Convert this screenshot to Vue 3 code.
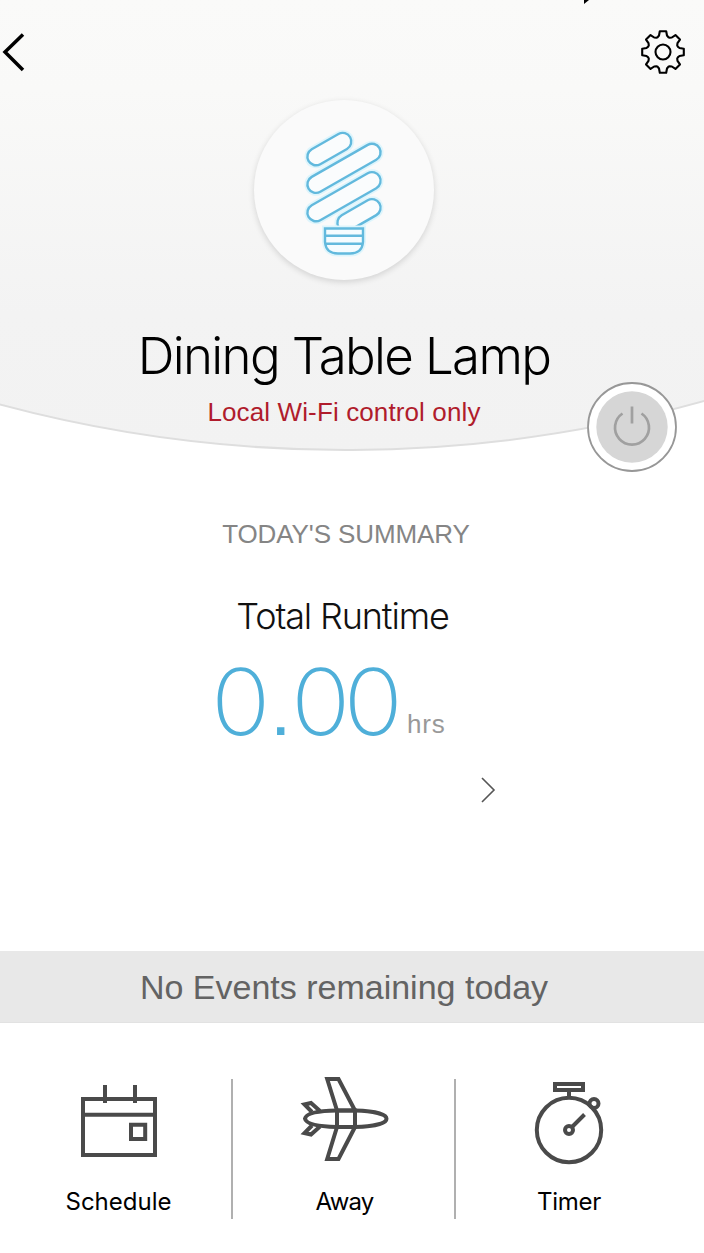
<template>
  <div class="screen">
    <header class="hero">
      <svg class="hero-bg" width="704" height="460" viewBox="0 0 704 460">
        <defs>
          <linearGradient id="heroFill" x1="0" y1="0" x2="0" y2="1">
            <stop offset="0" stop-color="#fafaf9" />
            <stop offset="0.2" stop-color="#f9f9f8" />
            <stop offset="0.7" stop-color="#f3f3f3" />
            <stop offset="1" stop-color="#f2f2f2" />
          </linearGradient>
        </defs>
        <path d="M-2 -2H706V400.500A1337 1337 0 0 1 -2 404Z" fill="url(#heroFill)" stroke="#dedede" stroke-width="2" />
        <path d="M584 0h5l-5 4z" fill="#000" />
      </svg>
      <nav class="nav">
        <button class="icon-button" aria-label="Back">
          <svg width="28" height="44" viewBox="0 0 28 44">
            <path d="M23 4.500L5 22l18 18" fill="none" stroke="#000" stroke-width="3.500" />
          </svg>
        </button>
        <button class="icon-button" aria-label="Settings">
          <svg width="48" height="48" viewBox="-24 -24 48 48">
            <path :d="gearPath" class="gear" />
            <circle r="7.500" class="gear" />
          </svg>
        </button>
      </nav>
      <div class="device">
        <div class="bulb">
          <svg width="90" height="134" viewBox="299 125 90 134">
            <g v-for="coil in coils" :key="coil">
              <path :d="coil" class="coil-glow" />
              <path :d="coil" class="coil-edge" />
              <path :d="coil" class="coil-inner" />
            </g>
            <path d="M325 228.500H363V242Q362 253.500 350 253.500H338Q326 253.500 325 242Z" class="base glow" />
            <path d="M325 228.500H363V242Q362 253.500 350 253.500H338Q326 253.500 325 242ZM325 235.800H363M325 243.700H363" class="base" />
          </svg>
        </div>
        <h1>{{ device.name }}</h1>
        <p class="status">{{ device.status }}</p>
      </div>
      <button class="power" aria-label="Power">
        <svg width="90" height="90" viewBox="-45 -45 90 90">
          <circle r="44" fill="#fff" stroke="#979797" stroke-width="1.800" />
          <circle r="35.700" fill="#d6d6d6" />
          <path d="M-9.500 -13.500A17 17 0 1 0 9.500 -13.500M0 -20.500V-3.500" fill="none" stroke="#a0a0a0" stroke-width="2.700" />
        </svg>
      </button>
    </header>

    <main class="summary">
      <h2>TODAY'S SUMMARY</h2>
      <h3>Total Runtime</h3>
      <div class="runtime">
        <div class="value"><span>{{ device.hours }}</span><span class="dot">.</span><span>{{ device.fraction }}</span></div>
        <span class="unit">hrs</span>
      </div>
      <svg class="more" width="16" height="28" viewBox="0 0 16 28">
        <path d="M2 2l12 12L2 26" fill="none" stroke="#555" stroke-width="1.600" />
      </svg>
    </main>

    <div class="events"><span>No Events remaining today</span></div>

    <footer class="actions">
      <button class="action schedule">
        <svg width="90" height="90" viewBox="74 1075 90 90">
          <path d="M83 1099H155V1155H83ZM83 1114.700H155M105 1085V1103M135 1085V1103M131 1124.700H145.200V1139H131Z" />
        </svg>
        <span>Schedule</span>
      </button>
      <button class="action away">
        <svg width="90" height="90" viewBox="299 1075 90 90">
          <path d="M304 1118.700C305 1113 317 1110.800 336 1110.500H354C372 1111 385.500 1114 385.500 1118.700C385.500 1123.500 372 1126.500 354 1127H336C317 1126.600 305 1124 304 1118.700Z" />
          <path d="M336 1110.500H354V1127H336ZM336 1110.500L326.200 1079H337.500L354 1110.500M336 1127L326.200 1159H337.500L354 1127" />
          <path d="M319 1111L310 1103L303.500 1104.500L311 1112M319 1126.500L310 1134.500L303.500 1133L311 1125.500" />
        </svg>
        <span>Away</span>
      </button>
      <button class="action timer">
        <svg width="90" height="90" viewBox="524 1075 90 90">
          <circle cx="569" cy="1130" r="32.200" />
          <circle cx="569" cy="1130" r="4" />
          <circle cx="594" cy="1103.500" r="4.500" />
          <path d="M555 1084H583V1090H555ZM569 1090V1098M572.500 1126.500L584.500 1114.500" />
        </svg>
        <span>Timer</span>
      </button>
    </footer>
  </div>
</template>

<script setup>
import { reactive } from 'vue';

const device = reactive({
  name: 'Dining Table Lamp',
  status: 'Local Wi-Fi control only',
  hours: '0',
  fraction: '00',
});

const coils = [
  'M316 156.700L342.700 141.500',
  'M316 184.300L372 152.300',
  'M316 212.700L372 180.700',
  'M346 222.700L372 207.700',
];

// one tooth, repeated every 45 degrees
const tooth = [[-5.3, -14.8], [-4, -16.5], [-3.2, -20.8], [3.2, -20.8], [4, -16.5], [5.3, -14.8]];
const points = [];
for (let i = 0; i < 8; i++) {
  const a = (i * Math.PI) / 4;
  tooth.forEach(([x, y]) => {
    const px = x * Math.cos(a) - y * Math.sin(a);
    const py = x * Math.sin(a) + y * Math.cos(a);
    points.push(`${px.toFixed(2)} ${py.toFixed(2)}`);
  });
}
const gearPath = `M${points.join('L')}Z`;
</script>

<style>
body {
  background: #fff;
}
</style>

<style scoped>
.screen {
  width: 704px;
  height: 1253px;
  overflow: hidden;
  background: #fff;
  font-family: 'Liberation Sans', Arial, sans-serif;
}

button {
  padding: 0;
  border: none;
  background: none;
  font: inherit;
  cursor: pointer;
}

svg {
  display: block;
}

h1,
h2,
h3,
p {
  margin: 0;
  white-space: nowrap;
}

.hero {
  position: relative;
  height: 460px;
}

.hero-bg {
  position: absolute;
  top: 0;
  left: 0;
}

.nav {
  position: relative;
  display: flex;
  justify-content: space-between;
  align-items: center;
  height: 100px;
  padding: 4px 17px 0 0;
  box-sizing: border-box;
}

.gear {
  fill: none;
  stroke: #000;
  stroke-width: 2.1;
  stroke-linejoin: round;
}

.device {
  position: relative;
  width: 688px;
  display: flex;
  flex-direction: column;
  align-items: center;
}

.bulb {
  width: 180px;
  height: 180px;
  display: flex;
  align-items: center;
  justify-content: center;
  padding-top: 4px;
  box-sizing: border-box;
  border-radius: 50%;
  background: #fafafa;
  box-shadow: 0 2px 6px rgba(0, 0, 0, 0.14);
}

.coil-glow,
.coil-edge,
.coil-inner {
  fill: none;
  stroke-linecap: round;
}

.coil-glow {
  stroke: #def5fc;
  stroke-width: 23;
}

.coil-edge {
  stroke: #62b9dd;
  stroke-width: 19.6;
}

.coil-inner {
  stroke: #fafcfd;
  stroke-width: 14.8;
}

.base {
  fill: #f4fcff;
  stroke: #62b9dd;
  stroke-width: 2.4;
}

.base.glow {
  stroke: #def5fc;
  stroke-width: 6;
}

h1 {
  margin-top: 45px;
  font-family: Inter, sans-serif;
  font-size: 51px;
  line-height: 62px;
  font-weight: 300;
  letter-spacing: -1.65px;
  color: #000;
}

.status {
  margin-top: 10px;
  font-size: 26px;
  line-height: 30px;
  letter-spacing: 0.12px;
  color: #b01c2c;
}

.power {
  position: absolute;
  top: 382px;
  left: 587px;
}

.summary {
  width: 688px;
  height: 491px;
  display: flex;
  flex-direction: column;
  align-items: center;
}

h2 {
  margin: 59px 0 0 4px;
  font-size: 26px;
  line-height: 30px;
  font-weight: 400;
  letter-spacing: -0.1px;
  color: #858585;
}

h3 {
  margin-top: 45px;
  margin-right: 3px;
  font-family: Inter, sans-serif;
  font-size: 36px;
  line-height: 44px;
  font-weight: 300;
  letter-spacing: -1.15px;
  color: #111;
}

.runtime {
  display: flex;
  align-items: baseline;
  width: 688px;
  margin-top: 10px;
  height: 108px;
}

.value {
  width: 196px;
  margin-left: 211px;
  white-space: nowrap;
  font-family: Inter, sans-serif;
  font-size: 92px;
  line-height: 108px;
  font-weight: 200;
  letter-spacing: -6.5px;
  color: #4fafd9;
  transform: scaleX(1.07);
  transform-origin: left;
}

.dot {
  display: inline-block;
  width: 25.6px;
  padding-left: 6px;
  box-sizing: border-box;
  font-family: 'Liberation Sans', Arial, sans-serif;
  font-size: 72px;
  line-height: 1;
  letter-spacing: 0;
}

.unit {
  font-size: 26px;
  letter-spacing: 0.8px;
  color: #999;
  transform: translateY(-2px);
}

.more {
  margin-top: 20px;
  margin-left: 288px;
}

.events {
  height: 72px;
  padding: 2px 16px 0 0;
  box-sizing: border-box;
  display: flex;
  align-items: center;
  justify-content: center;
  border-bottom: 1px solid #e2e2e2;
  background: #e8e8e8;
  font-size: 34px;
  color: #636363;
}

.actions {
  display: flex;
  margin: 56px 0 0 6px;
}

.action {
  height: 140px;
  display: flex;
  flex-direction: column;
  align-items: center;
  font-family: Inter, sans-serif;
  font-size: 24px;
  line-height: 30px;
  color: #000;
}

.schedule {
  width: 227px;
  border-right: 2px solid #b0b0b0;
}

.away {
  width: 223px;
  padding-left: 2px;
  box-sizing: border-box;
  border-right: 2px solid #b0b0b0;
  letter-spacing: -0.8px;
}

.timer {
  width: 226px;
  letter-spacing: -0.3px;
}

.action svg {
  margin-top: -4px;
  fill: none;
  stroke: #4a4a4a;
  stroke-width: 4;
}

.action span {
  margin-top: 22px;
}
</style>
